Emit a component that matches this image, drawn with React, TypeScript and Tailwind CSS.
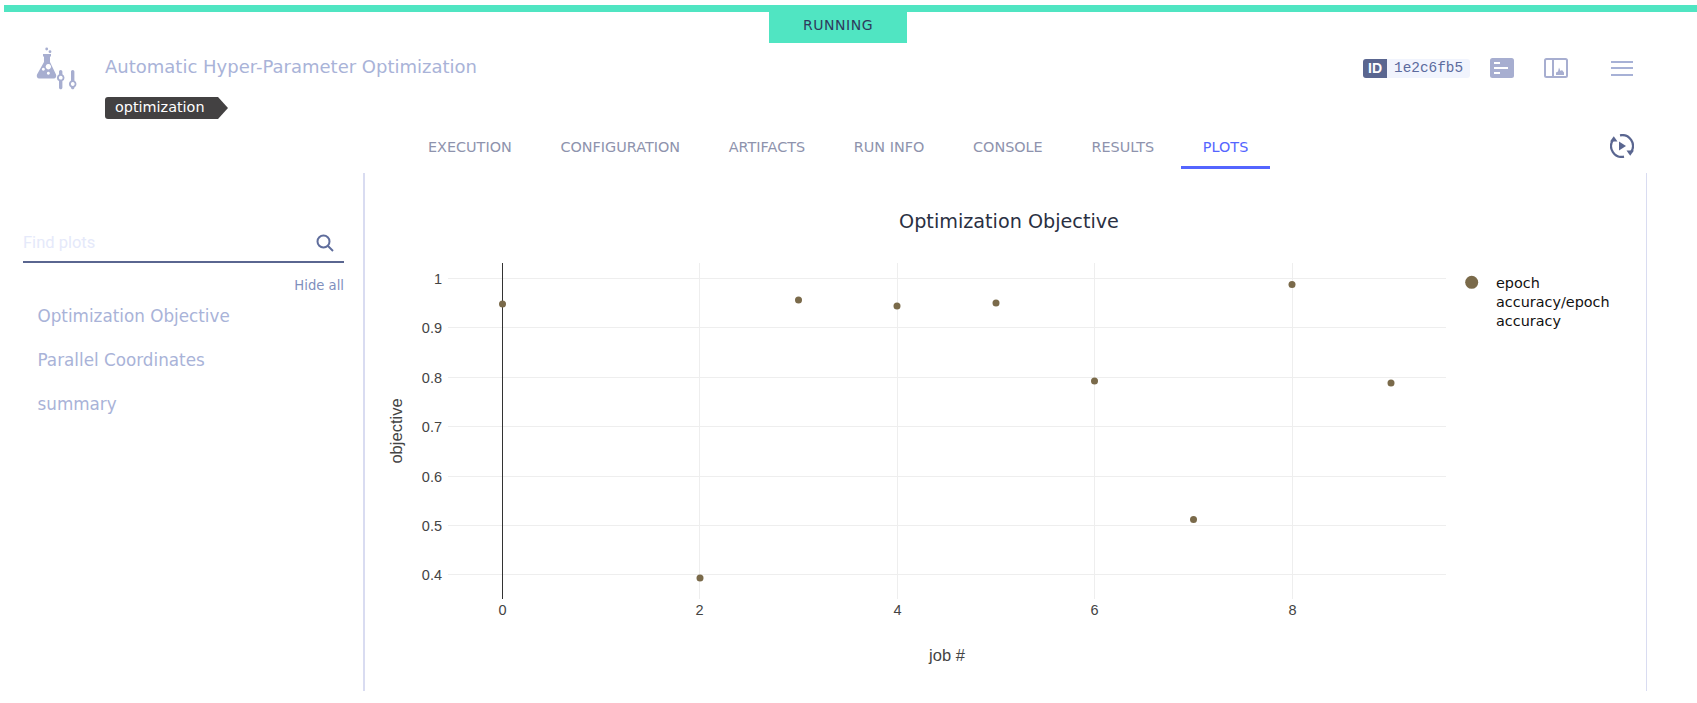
import React from "react";

const dejavu = "font-['DejaVu_Sans',sans-serif]";

function Logo() {
  return (
    <svg width="44" height="46" viewBox="0 0 44 46" className="shrink-0">
      <g fill="#a7aed0">
        <circle cx="11.7" cy="2" r="1.4" />
        <circle cx="15" cy="4.7" r="1.4" />
        <path fillRule="evenodd" d="M8 7h8v2.500h-1V15l6 12.500c.8 2-.3 4-2.200 4H4.200c-1.900 0-3-2-2.200-4L9 15V9.500H8zM13.300 17a2.700 2.700 0 1 0 .1 0zM8.300 20.800a1.500 1.500 0 1 0 .1 0zM13.300 24.800a1.500 1.500 0 1 0 .1 0z" />
        <path fillRule="evenodd" d="M24 24.800c0-1 .7-1.800 1.700-1.800s1.700.8 1.700 1.800v2.500a3.800 3.800 0 0 1 0 6.800v6.400c0 1-.7 1.800-1.700 1.800s-1.700-.8-1.700-1.800v-6.400a3.800 3.800 0 0 1 0-6.800zM25.700 28.800a1.900 1.900 0 1 0 .1 0z" />
        <path fillRule="evenodd" d="M36 24.800c0-1 .7-1.800 1.700-1.800s1.700.8 1.700 1.800v8.800a3.800 3.800 0 0 1 0 6.800v.1c0 1-.7 1.800-1.700 1.800s-1.700-.8-1.700-1.800v-.1a3.800 3.800 0 0 1 0-6.800zM37.700 35.100a1.900 1.900 0 1 0 .1 0z" />
      </g>
    </svg>
  );
}

function Tag() {
  return (
    <div className="flex h-[22px] w-[123px] items-center">
      <div className="flex h-[22px] w-[113px] items-center rounded-l-[3px] bg-[#434142] pl-[10px] text-[14.4px] text-white">optimization</div>
      <div className="h-0 w-0 border-y-[11px] border-l-[10px] border-y-transparent border-l-[#434142]" />
    </div>
  );
}

function DetailsIcon() {
  return (
    <svg width="24" height="20" viewBox="0 0 24 20">
      <rect x="0" y="0" width="24" height="20" rx="2.500" fill="#a7aed0" />
      <rect x="4" y="4" width="6" height="2" fill="#fff" />
      <rect x="4" y="9" width="14" height="2" fill="#fff" />
      <rect x="4" y="14" width="6" height="2" fill="#fff" />
    </svg>
  );
}

function PanelIcon() {
  return (
    <svg width="24" height="20" viewBox="0 0 24 20">
      <rect x="1" y="1" width="22" height="18" rx="1.500" fill="#fff" stroke="#a7aed0" strokeWidth="2" />
      <rect x="8" y="1" width="2" height="18" fill="#a7aed0" />
      <path d="M12 17v-2.500l2-1 1-4 1.500 3.500 1.500-1 2 2.500V17z" fill="#a7aed0" />
    </svg>
  );
}

function Menu() {
  return (
    <div className="flex w-[22px] flex-col gap-[4.5px]">
      <div className="h-[2px] bg-[#a7b1d6]" />
      <div className="h-[2px] bg-[#a7b1d6]" />
      <div className="h-[2px] bg-[#a7b1d6]" />
    </div>
  );
}

function Replay() {
  return (
    <svg width="24" height="24" viewBox="0 0 24 24" fill="none">
      <path d="M10 1.300A10.800 10.800 0 0 1 21 18" stroke="#5a6690" strokeWidth="2.200" />
      <path d="M14 22.700A10.800 10.800 0 0 1 3 6" stroke="#5a6690" strokeWidth="2.200" />
      <path d="M0 7.500 3.800 2.300 7.500 7.500z" fill="#5a6690" />
      <path d="M24 16.500 20.200 21.700 16.500 16.500z" fill="#5a6690" />
      <path d="M9 7.500 16 12l-7 4.500z" fill="#5a6690" />
    </svg>
  );
}

function SearchIcon() {
  return (
    <svg width="18" height="18" viewBox="0 0 18 18" fill="none" stroke="#5f6d9c" strokeWidth="2">
      <circle cx="7.500" cy="7.500" r="6" />
      <path d="m12 12 5 5" />
    </svg>
  );
}

const tabs = ["EXECUTION", "CONFIGURATION", "ARTIFACTS", "RUN INFO", "CONSOLE", "RESULTS", "PLOTS"];
const yTicks: [string, number][] = [
  ["1", 105.5], ["0.9", 154.5], ["0.8", 204.5], ["0.7", 253.5], ["0.6", 303.5], ["0.5", 352.5], ["0.4", 401.5],
];
const xTicks: [string, number][] = [["0", 136.5], ["2", 333.5], ["4", 531.5], ["6", 728.5], ["8", 926.5]];
const dots = [
  [136.5, 131], [334, 405], [432.5, 127], [531, 133], [630, 130], [728.5, 208], [827.5, 346.5], [926, 111.5], [1025, 210],
];

function Chart() {
  return (
    <svg width="1280" height="518" viewBox="0 0 1280 518" className="block shrink-0">
      <text x="643" y="55" textAnchor="middle" fontFamily="DejaVu Sans" fontSize="19.2" fill="#2a3042">Optimization Objective</text>
      {xTicks.slice(1).map(([l, x]) => <line key={l} x1={x} x2={x} y1="90" y2="426" stroke="#eeeeee" />)}
      {yTicks.map(([l, y]) => <line key={l} x1="82" x2="1080" y1={y} y2={y} stroke="#eeeeee" />)}
      <line x1="136.5" x2="136.5" y1="90" y2="426" stroke="#333333" shapeRendering="crispEdges" />
      {yTicks.map(([l, y]) => (
        <text key={l} x="76" y={y + 5} textAnchor="end" fontFamily="Liberation Sans" fontSize="14.5" fill="#444444">{l}</text>
      ))}
      {xTicks.map(([l, x]) => (
        <text key={l} x={x} y="442" textAnchor="middle" fontFamily="Liberation Sans" fontSize="14.5" fill="#444444">{l}</text>
      ))}
      <text x="581" y="488" textAnchor="middle" fontFamily="Liberation Sans" fontSize="16.5" fill="#444444">job #</text>
      <text transform="translate(36 258) rotate(-90)" textAnchor="middle" fontFamily="Liberation Sans" fontSize="16.5" fill="#444444">objective</text>
      {dots.map(([x, y]) => <circle key={x} cx={x} cy={y} r="3.500" fill="#7a6a4a" />)}
      <circle cx="1105.700" cy="109.300" r="6.500" fill="#7a6a4a" />
      <text fontFamily="DejaVu Sans" fontSize="14.4" fill="#111111">
        <tspan x="1130" y="115">epoch</tspan>
        <tspan x="1130" y="134">accuracy/epoch</tspan>
        <tspan x="1130" y="153">accuracy</tspan>
      </text>
    </svg>
  );
}

export default function App() {
  return (
    <div className={`flex h-[703px] w-[1697px] flex-col overflow-hidden bg-white pt-[5px] ${dejavu}`}>
      <div className="ml-[4px] h-[7px] bg-[#50e5c2]" />
      <div className="ml-[769px] flex h-[31px] w-[138px] items-center justify-center bg-[#50e5c2] pb-[4px] text-[14px] tracking-[0.55px] text-[#2e3a5c]">RUNNING</div>
      <div className="flex h-[66px] items-start">
        <div className="ml-[35px] mt-[4px]"><Logo /></div>
        <div className="ml-[26px] flex flex-col">
          <div className="mt-[11px] text-[18px] leading-[26px] text-[#a9b3d8]">Automatic Hyper-Parameter Optimization</div>
          <div className="mt-[17px]"><Tag /></div>
        </div>
        <div className="ml-auto mt-[15px] flex items-center">
          <div className="flex h-[19px] w-[107px] overflow-hidden rounded-[3px] bg-[#f1f4fd]">
            <div className="flex w-[24px] items-center justify-center bg-[#5a6690] font-['Liberation_Sans',sans-serif] text-[14px] font-bold text-white">ID</div>
            <div className="pl-[7px] font-['Liberation_Mono',monospace] text-[14.4px] leading-[19px] text-[#5c6b9e]">1e2c6fb5</div>
          </div>
          <div className="ml-[20px]"><DetailsIcon /></div>
          <div className="ml-[30px]"><PanelIcon /></div>
          <div className="ml-[43px] mr-[64px]"><Menu /></div>
        </div>
      </div>
      <div className="flex h-[64px] items-start">
        <div className="ml-[406px] mt-[19px] flex">
          {tabs.map((t) => (
            <div
              key={t}
              className={`mr-[4.7px] flex h-[41px] items-center border-b-[3px] px-[22px] pt-[1px] text-[14.4px] ${
                t === "PLOTS" ? "border-[#5465ff] text-[#5465ff]" : "border-transparent text-[#8e93ad]"
              }`}
            >
              {t}
            </div>
          ))}
        </div>
        <div className="ml-auto mr-[63px] mt-[25px]"><Replay /></div>
      </div>
      <div className="flex min-h-0 flex-1">
        <div className="flex w-[363px] flex-col pl-[23px] pr-[19px] pt-[48px]">
          <div className="flex h-[42px] items-center justify-between border-b-2 border-[#5a6690] pr-[10px] pt-[4px]">
            <span className="font-['Roboto',sans-serif] text-[16.5px] text-[#e5e9fa]">Find plots</span>
            <SearchIcon />
          </div>
          <div className="mt-[14px] text-right text-[13.2px] leading-[18px] text-[#7f8fbd]">Hide all</div>
          <div className="-mt-[1px] flex flex-col pl-[14.5px] text-[16.8px] leading-[44px] text-[#a9b3d8]">
            <div>Optimization Objective</div>
            <div>Parallel Coordinates</div>
            <div>summary</div>
          </div>
        </div>
        <div className="flex h-[518px] w-[1284px] border-l-2 border-r border-[#d9dcf1] pl-[1px]">
          <Chart />
        </div>
      </div>
    </div>
  );
}
